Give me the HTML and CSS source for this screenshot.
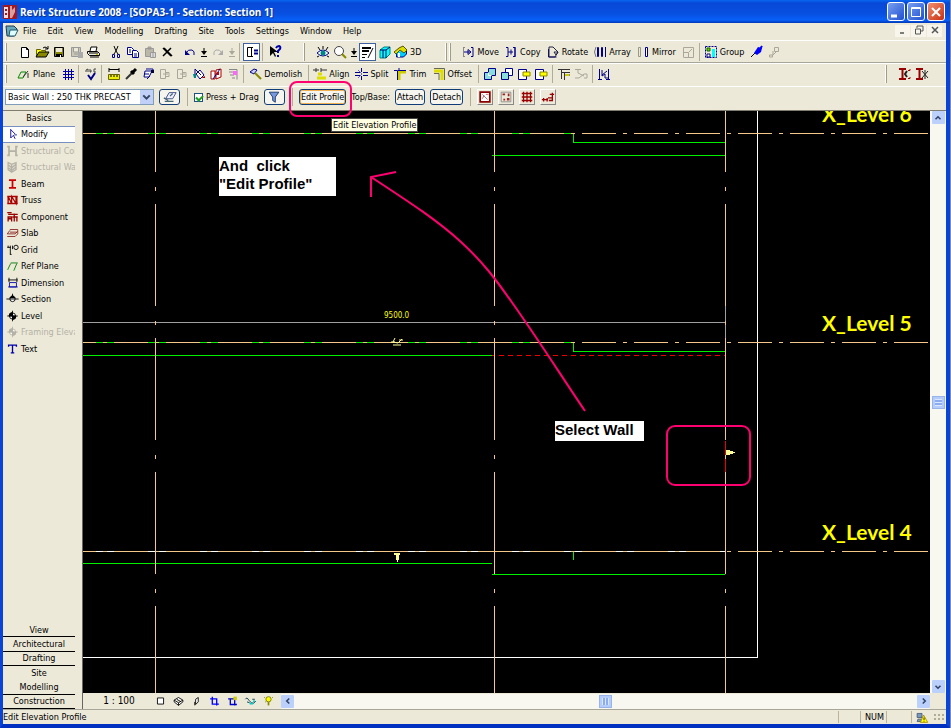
FILE: index.html
```html
<!DOCTYPE html>
<html lang="en">
<head>
<meta charset="utf-8">
<title>Revit Structure 2008 - [SOPA3-1 - Section: Section 1]</title>
<link rel="stylesheet" href="styles.css">
</head>
<body>
<svg class="sprite" aria-hidden="true">
  <symbol id="new" viewBox="0 0 16 16"><path d="M4.500 3.500h5l2 2v8h-7zM9.500 3.500v2h2" fill="#fff" stroke="#000"/></symbol>
  <symbol id="open" viewBox="0 0 16 16"><path d="M2.500 12.500v-7h4l1 1h4v2" fill="#ff0" stroke="#660"/><path d="M2 13l3-5h10l-3 5z" fill="#880" stroke="#000"/><path d="M9 4q2-2 4 0l1 1M14 2v3h-3" fill="none" stroke="#000"/></symbol>
  <symbol id="save" viewBox="0 0 16 16"><path d="M3.500 3.500h9v9h-9z" fill="#880" stroke="#000"/><path d="M5 4h6v4H5z" fill="#ece9d8"/><path d="M5 10h6v3H5z" fill="#000"/><path d="M9 11h1v2H9z" fill="#fff"/></symbol>
  <symbol id="saveall" viewBox="0 0 16 16"><path d="M3.500 3.500h9v9h-9zM5.500 4v4h5V4M6 10h5v3" fill="#ccc8b8" stroke="#999"/><path d="M10 8h5v6h-5z" fill="#aaa"/></symbol>
  <symbol id="print" viewBox="0 0 16 16"><path d="M5 7l1-4h6l-1 4" fill="#fff" stroke="#000"/><path d="M2.500 7.500h10l2 2v2h-10l-2-2zM5 13h9M4 9h9" fill="#ece9d8" stroke="#000"/><path d="M11 10h2v1h-2z" fill="#cc0"/></symbol>
  <symbol id="cut" viewBox="0 0 16 16"><path d="M6 2l2 5 2 3M10 2l-2 5-2 3" fill="none" stroke="#000"/><path d="M4.500 10.500h2v3h-2zM9.500 10.500h2v3h-2z" fill="none" stroke="#008"/></symbol>
  <symbol id="copy" viewBox="0 0 16 16"><path d="M2.500 3.500h4l2 2v5h-6z" fill="#fff" stroke="#008"/><path d="M7.500 6.500h4l2 2v5h-6zM9 10h3M9 12h3M4 6h2M4 8h2" fill="#fff" stroke="#008"/></symbol>
  <symbol id="paste" viewBox="0 0 16 16"><path d="M3.500 4.500h8v8h-8zM6 3h3v2H6z" fill="#bbb7a8" stroke="#999"/><path d="M8.500 8.500h5v5h-5zM10 10h2M10 12h2" fill="#ddd" stroke="#999"/></symbol>
  <symbol id="del" viewBox="0 0 16 16"><path d="M4 4l8 8M12 4l-8 8M5 4l8 8" fill="none" stroke="#000" stroke-width="1.500"/></symbol>
  <symbol id="undo" viewBox="0 0 16 16"><path d="M4 9q2-4 6-3 3 1 2 5" fill="none" stroke="#008"/><path d="M3 6v5h5z" fill="#008"/></symbol>
  <symbol id="redo" viewBox="0 0 16 16"><path d="M12 9q-2-4-6-3-3 1-2 5" fill="none" stroke="#aaa"/><path d="M13 6v5H8z" fill="#aaa"/></symbol>
  <symbol id="drop" viewBox="0 0 16 16"><path d="M8 4v4M5 12.500h6" stroke="currentColor" stroke-width="1" fill="none"/><path d="M5 7h6l-3 4z" fill="currentColor"/></symbol>
  <symbol id="browser" viewBox="0 0 16 16"><path d="M3.500 3.500h4v9h-4zM7 3.500h2M7 12.500h2" fill="none" stroke="#000"/><path d="M10 6.500h4M10 9.500h4" stroke="#008" stroke-width="2"/></symbol>
  <symbol id="help" viewBox="0 0 16 16"><path d="M3 2v10l3-3 2 4 1-1-2-4h4z" fill="#000"/><path d="M9 4q1-2 3-2 2 1 1 3l-2 2v2M11 11v2" stroke="#00a" stroke-width="2" fill="none"/></symbol>
  <symbol id="eye" viewBox="0 0 16 16"><path d="M2 9q6-6 12 0-6 6-12 0z" fill="#fff" stroke="#008"/><circle cx="8" cy="9" r="2.500" fill="#088"/><path d="M8 2v3M3 3l2 3M13 3l-2 3M4 12l-2 1M12 12l2 1" stroke="#000"/></symbol>
  <symbol id="zoom" viewBox="0 0 16 16"><circle cx="7" cy="7" r="4.500" fill="#fff" stroke="#444"/><path d="M10 10l4 4" stroke="#880" stroke-width="2"/></symbol>
  <symbol id="thin" viewBox="0 0 16 16"><path d="M2 4h9M2 7h7" stroke="#000" stroke-width="2"/><path d="M2 10.500h5M2 13.500h3" stroke="#000"/><path d="M13 4l-5 10" stroke="#000"/></symbol>
  <symbol id="cube" viewBox="0 0 16 16"><path d="M3 6l4-3h6v7l-4 4H3z" fill="#0ff" stroke="#008080"/><path d="M3 6h6v8M9 6l4-3M6 6v8" fill="none" stroke="#006"/></symbol>
  <symbol id="house" viewBox="0 0 16 16"><path d="M3.500 8v5h7l3-3V6" fill="#0cf" stroke="#008"/><path d="M1 8l5-4 4-2 4 4-3 3-4-3-4 4z" fill="#dd0" stroke="#550"/><path d="M5 9h2v4H5z" fill="#fff"/></symbol>
  <symbol id="move" viewBox="0 0 16 16"><path d="M3.500 3v10M3 3.500h2M3 12.500h2" stroke="#888" fill="none"/><path d="M4 8h6M8 5.500v5l3-2.500zM11 3.500h2v9h-2" stroke="#008" fill="none"/></symbol>
  <symbol id="copyel" viewBox="0 0 16 16"><path d="M3 3.500h2v9H3M10 3.500h2v9h-2M12 3v10" stroke="#008" fill="none"/><path d="M5 8h5M8 5.500v5" stroke="#008"/></symbol>
  <symbol id="rotate" viewBox="0 0 16 16"><path d="M3.500 5v8h8" stroke="#008" fill="none"/><path d="M4 3h4l5 5-3 5H4zM9 8l4 0-2 3z" stroke="#224" fill="none"/></symbol>
  <symbol id="array" viewBox="0 0 16 16"><path d="M4 3Q1 8 4 13" stroke="#777" fill="none"/><path d="M5.500 3.500h1v9h-1zM9.500 3.500h1v9h-1zM13.500 3v10" stroke="#008" fill="none"/></symbol>
  <symbol id="mirror" viewBox="0 0 16 16"><path d="M3.500 3.500h2v9h-2z" stroke="#998" fill="none"/><path d="M10.500 3.500h2v9h-2z" stroke="#008" fill="#fff"/></symbol>
  <symbol id="resize" viewBox="0 0 16 16"><path d="M3.500 13V3.500h10v10H8M3.500 8.500h5v5h-5M9 8l3-3" stroke="#aaa69a" fill="none"/></symbol>
  <symbol id="group" viewBox="0 0 16 16"><path d="M2.500 2.500h11v11h-11z" fill="none" stroke="#008" stroke-dasharray="2 1"/><path d="M4 4h3v3H4z" fill="#8c0" stroke="#060"/><path d="M9 5h3v8H9z" fill="#0ff"/><path d="M4 10h3v3H4z" fill="#fff" stroke="#008"/></symbol>
  <symbol id="pin" viewBox="0 0 16 16"><path d="M9 3l4 1-1 4-4 3-3-2z" fill="#00f"/><path d="M6 9l-4 4" stroke="#000"/><path d="M13 2l-2 3" stroke="#00f" stroke-width="2"/></symbol>
  <symbol id="unpin" viewBox="0 0 16 16"><path d="M8.500 3.500h4v4h-4zM7 7v4H3.500v2h3v-2M10 8l-3 3" stroke="#aaa69a" fill="none"/></symbol>
  <symbol id="wplane" viewBox="0 0 16 16"><path d="M2 12l3-6h5l-3 6z" fill="none" stroke="#080"/><path d="M7 11l5-6M12 7v5" stroke="#333"/></symbol>
  <symbol id="gridb" viewBox="0 0 16 16"><path d="M3 5.500h11M3 8.500h11M3 11.500h11M5.500 3v11M8.500 3v11M11.500 3v11" stroke="#0000a8" fill="none"/></symbol>
  <symbol id="spell" viewBox="0 0 16 16"><path d="M3 6V4l2-1v3M7 3v3h1V4M13 3h-2v3h2" stroke="#444" fill="none"/><path d="M5 9l3 4 4-6" stroke="#008" stroke-width="2" fill="none"/></symbol>
  <symbol id="tape" viewBox="0 0 16 16"><path d="M3 3.500h10M3 2v4M13 2v4" stroke="#000"/><path d="M2.500 8.500h11v5h-11z" fill="#ee0" stroke="#660"/><path d="M5 9v2M8 9v2M11 9v2" stroke="#000"/></symbol>
  <symbol id="dropper" viewBox="0 0 16 16"><path d="M3 13l6-6" stroke="#333" stroke-width="2"/><path d="M8 5l3 3M10 6l3-3" stroke="#000" stroke-width="3"/></symbol>
  <symbol id="paint" viewBox="0 0 16 16"><path d="M5 5h7l-3 6H4zM6 3h7v3M4 8h5M7 13l3-3" fill="#fff" stroke="#008"/><path d="M11 4h3v3h-3z" fill="#003"/></symbol>
  <symbol id="linkg" viewBox="0 0 16 16"><path d="M3.500 3.500h5v9h-5zM8 6.500h4v4H8M6 8h5" stroke="#aaa69a" fill="none"/></symbol>
  <symbol id="bucket" viewBox="0 0 16 16"><path d="M5 8l4-4 4 5-4 4z" fill="#fff" stroke="#008"/><path d="M4 3v6M4 3l6 6" stroke="#008"/><path d="M2 8h3v4H3z" fill="#088"/><path d="M10 12l4-2v2z" fill="#a00"/></symbol>
  <symbol id="split" viewBox="0 0 16 16"><path d="M3 5h4v8H3zM8 4l5-1v8l-5 2z" fill="#fff" stroke="#a00"/><path d="M5 13L12 3" stroke="#008"/><path d="M9 6h2v3H9z" fill="#c00"/></symbol>
  <symbol id="phase" viewBox="0 0 16 16"><path d="M4 3.500h8v10M4 6h4M5 9h4M7 12h3" stroke="#888" fill="none"/><path d="M8 5h4v4H8z" fill="#f6f"/></symbol>
  <symbol id="hammer" viewBox="0 0 16 16"><path d="M3 6l4-3 3 1-3 4z" fill="#ccf" stroke="#008"/><path d="M8 7l6 6" stroke="#880" stroke-width="2"/></symbol>
  <symbol id="align" viewBox="0 0 16 16"><path d="M1 4h6M9 4h6M4 2v4M9 2v4" stroke="#333"/><path d="M6 8h4M5 12h9" stroke="#dd0" stroke-width="3" fill="none"/></symbol>
  <symbol id="splitel" viewBox="0 0 16 16"><path d="M2 6.500h5M2 9.500h5M10 6.500h5M10 9.500h5M8.500 2v4M8.500 10v4" stroke="#008"/><path d="M5 4l4 4-4 4" stroke="#66c" fill="none"/></symbol>
  <symbol id="trim" viewBox="0 0 16 16"><path d="M2 4.500h3M7 2v3" stroke="#008"/><path d="M7 14V6h7" stroke="#cc0" stroke-width="3" fill="none"/><path d="M5.500 14V4.500H14" stroke="#008" fill="none"/></symbol>
  <symbol id="offset" viewBox="0 0 16 16"><path d="M3 5h8v9" stroke="#dd0" stroke-width="3" fill="none"/><path d="M3 2.500h10.500V14M3 7.500h5V14" stroke="#665" fill="none"/></symbol>
  <symbol id="join" viewBox="0 0 16 16"><path d="M6.500 2.500h7v7h-4v4h-7v-7h4z" fill="#8dd" stroke="#008"/><path d="M6.500 6.500v3h3" fill="none" stroke="#fff"/></symbol>
  <symbol id="unjoin" viewBox="0 0 16 16"><path d="M6.500 2.500h7v7h-7z" fill="#fff" stroke="#008"/><path d="M2.500 6.500h7v7h-7z" fill="#8dd" stroke="#008"/></symbol>
  <symbol id="cutg" viewBox="0 0 16 16"><path d="M2.500 3.500h8v10h-8z" fill="#fff" stroke="#008"/><path d="M7 6h7v4H7z" fill="#ff0" stroke="#880"/></symbol>
  <symbol id="beamj" viewBox="0 0 16 16"><path d="M2 3.500h12M5.500 4v9M8.500 6v8M6 6.500h8M9 9h5" stroke="#333" fill="none"/><path d="M9 8h4v2H9z" fill="#cc0"/></symbol>
  <symbol id="beamk" viewBox="0 0 16 16"><path d="M2 3.500h6M5 4v3l6 3M2 12h4l5-4h3v4h-3" stroke="#aaa69a" fill="none"/></symbol>
  <symbol id="wallj" viewBox="0 0 16 16"><path d="M3.500 3v10.500M12.500 3v10.500M2 13.500h4M10 13.500h4M6 4v6l3-2v4h4M6 9l5-4" stroke="#008" fill="none"/></symbol>
  <symbol id="beamr" viewBox="0 0 16 16"><path d="M2 3h7M5.500 3v10M2 13h7" stroke="#900" stroke-width="2"/><path d="M10 5l-2 3 2 3" stroke="#222" fill="none" stroke-width="2"/><path d="M11 4.500h2V3M11 12.500h2V11" stroke="#900" fill="none"/></symbol>
  <symbol id="beamx" viewBox="0 0 16 16"><path d="M2 3h7M5.500 3v10M2 13h7" stroke="#900" stroke-width="2"/><path d="M8 5l6 7M14 5l-6 7M11 4v9" stroke="#222"/></symbol>
  <symbol id="props" viewBox="0 0 16 16"><path d="M7 3h8l-4 7H3z" fill="#eef" stroke="#347"/><path d="M2 13h10M8 7l3-3M1 9l5 3" stroke="#467" stroke-width="1.500"/></symbol>
  <symbol id="filter" viewBox="0 0 16 16"><path d="M2.500 2.500h11L9.500 8v6l-3-2V8z" fill="#79d" stroke="#136"/></symbol>
  <symbol id="r1" viewBox="0 0 16 16"><path d="M2.500 2.500h11v11h-11z" fill="#fff" stroke="#800" stroke-width="2"/><path d="M5 5l6 6M5 10l2-4M9 5h3" stroke="#a66"/></symbol>
  <symbol id="r2" viewBox="0 0 16 16"><path d="M2.500 2.500h11v11h-11z" fill="none" stroke="#888"/><path d="M4 4h3v2H4zM10 4h2v3h-2zM5 10h2v2H5zM9 9h3v3H9z" fill="#922"/></symbol>
  <symbol id="r3" viewBox="0 0 16 16"><path d="M2 4h12M2 8h12M2 12h12M4 2v12M8 2v12M12 2v12" stroke="#900" stroke-width="1.500"/></symbol>
  <symbol id="r4" viewBox="0 0 16 16"><path d="M3 9v4M1 11h7M7 9v4M9 12h4V3M10 5h5M8 9h5" stroke="#900" stroke-width="1.500" fill="none"/></symbol>
  <symbol id="modify" viewBox="0 0 16 16"><path d="M6 2.500v10l3-3 2 4M6 3l5 5M10 9h3" fill="none" stroke="#008"/></symbol>
  <symbol id="col" viewBox="0 0 16 16"><path d="M4 3v10M12 3v10M4 8h8M2 3h3M2 13h3M11 3h3M11 13h3" stroke="#b4b1a6" stroke-width="2"/></symbol>
  <symbol id="swall" viewBox="0 0 16 16"><path d="M3 3l4 2 5-2v8l-5 3-4-3zM7 5v9M4 6l3 3 5-4M4 9l3 3 5-4" stroke="#b4b1a6" stroke-width="1.500" fill="none"/></symbol>
  <symbol id="beam" viewBox="0 0 16 16"><path d="M4 3.500h8M8 3v10M4 12.500h8" stroke="#c00" stroke-width="2"/></symbol>
  <symbol id="truss" viewBox="0 0 16 16"><path d="M2 4h12M2 12h12M3 4v8M13 4v8M3 4l4 8V4l5 8V4" stroke="#a00" stroke-width="1.500" fill="none"/></symbol>
  <symbol id="comp" viewBox="0 0 16 16"><path d="M2 3h5M3 5h11M10 4v9M8 8h6M3 13V8h4v5M3 10h4M13 8v5" stroke="#900" stroke-width="1.500" fill="none"/></symbol>
  <symbol id="slab" viewBox="0 0 16 16"><path d="M5 4h9v5l-3 3H2M2 9h9l3-3M2 9l3-4M5 7h8" stroke="#822" fill="none" stroke-width="1"/></symbol>
  <symbol id="grid" viewBox="0 0 16 16"><circle cx="12" cy="5" r="2.500" fill="none" stroke="#000"/><path d="M5.500 3v10M2 5h4M8 3v4M3 3v2M5 13h2" stroke="#000"/></symbol>
  <symbol id="ref" viewBox="0 0 16 16"><path d="M6 4.500h8M3 11l3-6M10 12l3-7" stroke="#070" fill="none"/><path d="M2 12l2-1M9 13l2-1" stroke="#0a0"/></symbol>
  <symbol id="dim" viewBox="0 0 16 16"><path d="M4 2v5M13 2v5M3 4.500h11" stroke="#000"/><path d="M4.500 7.500h8v5h-8zM3 12.500h11" stroke="#00a" fill="none"/></symbol>
  <symbol id="sect" viewBox="0 0 16 16"><circle cx="8" cy="8" r="3" fill="#fff" stroke="#000"/><path d="M1 8h14M8 2v3" stroke="#000"/><path d="M4 7l4-4 4 4z" fill="#000"/></symbol>
  <symbol id="level" viewBox="0 0 16 16"><circle cx="8" cy="8" r="3.500" fill="#fff" stroke="currentColor"/><path d="M2 8h12M8 2v12" stroke="currentColor"/><path d="M8 4v4H4q0-4 4-4zM8 12V8h4q0 4-4 4z" fill="currentColor" stroke="currentColor"/></symbol>
  <symbol id="text" viewBox="0 0 16 16"><path d="M3.500 5.500v-2h9v2M8 3.500v9M6 12.500h4" stroke="#00a" stroke-width="1.500" fill="none"/></symbol>
  <symbol id="vbox" viewBox="0 0 16 16"><path d="M4.500 4.500h7v7h-7z" fill="#fff" stroke="#000"/></symbol>
  <symbol id="vcube" viewBox="0 0 16 16"><path d="M3 7l5-3 5 3v2l-5 4-5-4zM3 7l5 3 5-3M8 10v3M6 6l5 3" fill="#fff" stroke="#000"/></symbol>
  <symbol id="vshadow" viewBox="0 0 16 16"><path d="M7 6l3-2v5l-3 3zM6 9v4" fill="#fff" stroke="#000"/></symbol>
  <symbol id="vcrop" viewBox="0 0 16 16"><path d="M5.500 3v8.500H13M3 5.500h7.500V13" fill="none" stroke="#00f" stroke-width="1.500"/></symbol>
  <symbol id="vcrop2" viewBox="0 0 16 16"><path d="M5.500 5v7H13M3 5.500h7.500V13" fill="none" stroke="#00c" stroke-width="1.500"/><path d="M9 3h4v4H9z" fill="#cc0"/></symbol>
  <symbol id="vhide" viewBox="0 0 16 16"><path d="M2 6q2-3 4 1l3 3q3 2 5-2M4 9l3 1M10 6l3 0" fill="none" stroke="#034"/><path d="M7 10h4v2H7zM11 7h2v2h-2z" fill="#0cc"/></symbol>
  <symbol id="bulb" viewBox="0 0 16 16"><circle cx="8" cy="6" r="3" fill="#ff0" stroke="#770"/><path d="M7 9h2v4H7z" fill="#880"/><path d="M3 4h1M12 4h1M4 9h1" stroke="#880"/></symbol>
  <symbol id="chev" viewBox="0 0 16 16"><path d="M4 6l4 4 4-4" fill="none" stroke="#346" stroke-width="2.500"/></symbol>
  <symbol id="warn" viewBox="0 0 16 16"><path d="M2 3h6v5H2zM3 10h6v3H2z" fill="#79b" stroke="#457"/><path d="M10 5l5 9H6z" fill="#ff0" stroke="#a80"/><path d="M10.500 8v3M10.500 12v1" stroke="#000"/></symbol>
</svg>

<div class="window">
  <header class="title">
    <svg class="logo" viewBox="0 0 14 14" aria-hidden="true"><path d="M0 0h14v14H0z" fill="#a01820"/><path d="M1 2h4v11H1z" fill="#f4dcdc"/><path d="M2 4h2v2H2zM2 8h2v2H2z" fill="#a01820"/><path d="M7 1h2v4l3-3v5l-3 6H7z" fill="#d8a0a0"/></svg>
    <h1>Revit Structure 2008 - [SOPA3-1 - Section: Section 1]</h1>
    <button class="cap" aria-label="Minimize"><svg viewBox="0 0 16 16"><path d="M3 12h6" stroke="#fff" stroke-width="3"/></svg></button>
    <button class="cap" aria-label="Maximize"><svg viewBox="0 0 16 16"><path d="M3.500 3.500h9v9h-9zM3 4.500h10" fill="none" stroke="#fff"/></svg></button>
    <button class="cap close" aria-label="Close"><svg viewBox="0 0 16 16"><path d="M4 4l8 8M12 4l-8 8" stroke="#fff" stroke-width="2"/></svg></button>
  </header>

  <nav class="menu">
    <svg class="doc" viewBox="0 0 14 14" aria-hidden="true"><path d="M1 2h8l3 3-3 7H2z" fill="#6ab" stroke="#235"/><path d="M5 6h8l-3 6H4z" fill="#dff" stroke="#256"/></svg>
    <button>File</button><button>Edit</button><button>View</button><button>Modelling</button><button>Drafting</button><button>Site</button><button>Tools</button><button>Settings</button><button>Window</button><button>Help</button>
    <span class="push"></span>
    <button class="mdi" aria-label="Minimize document"><svg viewBox="0 0 10 10"><path d="M2 8h4" stroke="#555" stroke-width="1.500"/></svg></button>
    <button class="mdi" aria-label="Restore document"><svg viewBox="0 0 10 10"><path d="M3 3V1h6v5H7M1.500 4h5v5h-5z" stroke="#555" fill="none"/></svg></button>
    <button class="mdi" aria-label="Close document"><svg viewBox="0 0 10 10"><path d="M2 2l6 6M8 2l-6 6" stroke="#555" stroke-width="1.500"/></svg></button>
  </nav>

  <div class="bar">
    <i class="grip"></i><i class="lead"></i>
    <button class="ib" aria-label="New"><svg><use href="#new"/></svg></button>
    <button class="ib" aria-label="Open"><svg><use href="#open"/></svg></button>
    <button class="ib" aria-label="Save"><svg><use href="#save"/></svg></button>
    <button class="ib" aria-label="Save to central"><svg><use href="#saveall"/></svg></button>
    <button class="ib" aria-label="Print"><svg><use href="#print"/></svg></button>
    <i class="sep"></i>
    <button class="ib" aria-label="Cut"><svg><use href="#cut"/></svg></button>
    <button class="ib" aria-label="Copy to clipboard"><svg><use href="#copy"/></svg></button>
    <button class="ib" aria-label="Paste"><svg><use href="#paste"/></svg></button>
    <button class="ib" aria-label="Delete"><svg><use href="#del"/></svg></button>
    <i class="sep"></i>
    <button class="ib" aria-label="Undo"><svg><use href="#undo"/></svg></button>
    <button class="mini" aria-label="Undo list"><svg><use href="#drop"/></svg></button>
    <button class="ib" aria-label="Redo"><svg><use href="#redo"/></svg></button>
    <button class="mini dim" aria-label="Redo list"><svg><use href="#drop"/></svg></button>
    <i class="sep line"></i>
    <button class="ib on" aria-label="Project browser"><svg><use href="#browser"/></svg></button>
    <i class="sep line"></i>
    <button class="ib" aria-label="Context help"><svg><use href="#help"/></svg></button>
    <i class="wide"></i><i class="grip"></i><i class="lead"></i>
    <button class="ib" aria-label="Dynamic view"><svg><use href="#eye"/></svg></button>
    <button class="ib" aria-label="Zoom"><svg><use href="#zoom"/></svg></button>
    <button class="mini" aria-label="Zoom list"><svg><use href="#drop"/></svg></button>
    <button class="ib on" aria-label="Thin lines"><svg><use href="#thin"/></svg></button>
    <button class="ib" aria-label="Shaded view"><svg><use href="#cube"/></svg></button>
    <button class="tb"><svg><use href="#house"/></svg>3D</button>
    <i class="wide"></i><i class="grip"></i><i class="grip"></i><i class="lead"></i>
    <button class="tb"><svg><use href="#move"/></svg>Move</button>
    <button class="tb"><svg><use href="#copyel"/></svg>Copy</button>
    <button class="tb"><svg><use href="#rotate"/></svg>Rotate</button>
    <button class="tb"><svg><use href="#array"/></svg>Array</button>
    <button class="tb"><svg><use href="#mirror"/></svg>Mirror</button>
    <button class="ib" aria-label="Resize"><svg><use href="#resize"/></svg></button>
    <i class="sep line"></i>
    <button class="tb"><svg><use href="#group"/></svg>Group</button>
    <button class="ib" aria-label="Pin"><svg><use href="#pin"/></svg></button>
    <button class="ib" aria-label="Unpin"><svg><use href="#unpin"/></svg></button>
  </div>

  <div class="bar">
    <i class="grip"></i><i class="lead"></i>
    <button class="tb"><svg><use href="#wplane"/></svg>Plane</button>
    <button class="ib" aria-label="Work plane grid"><svg><use href="#gridb"/></svg></button>
    <i class="sep line"></i>
    <button class="ib" aria-label="Spelling"><svg><use href="#spell"/></svg></button>
    <i class="sep line"></i>
    <button class="ib" aria-label="Tape measure"><svg><use href="#tape"/></svg></button>
    <button class="ib" aria-label="Match type"><svg><use href="#dropper"/></svg></button>
    <button class="ib" aria-label="Linework"><svg><use href="#paint"/></svg></button>
    <button class="ib" aria-label="Link"><svg><use href="#linkg"/></svg></button>
    <button class="ib" aria-label="Unlink"><svg><use href="#linkg"/></svg></button>
    <button class="ib" aria-label="Paint"><svg><use href="#bucket"/></svg></button>
    <button class="ib" aria-label="Split face"><svg><use href="#split"/></svg></button>
    <button class="ib" aria-label="Phase"><svg><use href="#phase"/></svg></button>
    <i class="sep line"></i>
    <button class="tb"><svg><use href="#hammer"/></svg>Demolish</button>
    <i class="sep line"></i>
    <button class="tb"><svg><use href="#align"/></svg>Align</button>
    <button class="tb"><svg><use href="#splitel"/></svg>Split</button>
    <button class="tb"><svg><use href="#trim"/></svg>Trim</button>
    <button class="tb"><svg><use href="#offset"/></svg>Offset</button>
    <i class="sep line"></i>
    <button class="ib" aria-label="Join geometry"><svg><use href="#join"/></svg></button>
    <button class="ib" aria-label="Unjoin geometry"><svg><use href="#unjoin"/></svg></button>
    <button class="ib" aria-label="Cut geometry"><svg><use href="#cutg"/></svg></button>
    <button class="ib" aria-label="Uncut geometry"><svg><use href="#cutg"/></svg></button>
    <i class="sep line"></i>
    <button class="ib" aria-label="Beam joins"><svg><use href="#beamj"/></svg></button>
    <button class="ib" aria-label="Coping"><svg><use href="#beamk"/></svg></button>
    <i class="sep line"></i>
    <button class="ib" aria-label="Wall joins"><svg><use href="#wallj"/></svg></button>
    <span class="push"></span>
    <i class="grip"></i><i class="lead"></i>
    <button class="ib" aria-label="Release beam"><svg><use href="#beamr"/></svg></button>
    <button class="ib" aria-label="Reset beam"><svg><use href="#beamx"/></svg></button>
    <i class="tail"></i>
  </div>

  <div class="options">
    <span class="pick"><select aria-label="Type"><option>Basic Wall : 250 THK PRECAST</option></select><svg><use href="#chev"/></svg></span>
    <button class="xp" aria-label="Element properties"><svg><use href="#props"/></svg></button>
    <i class="sep line"></i>
    <label class="check"><input type="checkbox" checked>Press + Drag</label>
    <button class="xp" aria-label="Filter selection"><svg><use href="#filter"/></svg></button>
    <i class="sep line"></i>
    <span class="callout"><button class="xp hot">Edit Profile</button><span class="tip" role="tooltip">Edit Elevation Profile</span></span>
    <span>Top/Base:</span>
    <button class="xp">Attach</button>
    <button class="xp">Detach</button>
    <i class="sep line"></i>
    <button class="raised" aria-label="Area"><svg><use href="#r1"/></svg></button>
    <button class="raised" aria-label="Path"><svg><use href="#r2"/></svg></button>
    <button class="raised" aria-label="Reinforcement"><svg><use href="#r3"/></svg></button>
    <button class="raised" aria-label="Rebar"><svg><use href="#r4"/></svg></button>
  </div>

  <main class="work">
    <aside class="side">
      <h2>Basics</h2>
      <ul class="tools">
        <li><button class="sel"><svg><use href="#modify"/></svg>Modify</button></li>
        <li><button disabled><svg><use href="#col"/></svg>Structural Column</button></li>
        <li><button disabled><svg><use href="#swall"/></svg>Structural Wall</button></li>
        <li><button><svg><use href="#beam"/></svg>Beam</button></li>
        <li><button><svg><use href="#truss"/></svg>Truss</button></li>
        <li><button><svg><use href="#comp"/></svg>Component</button></li>
        <li><button><svg><use href="#slab"/></svg>Slab</button></li>
        <li><button><svg><use href="#grid"/></svg>Grid</button></li>
        <li><button><svg><use href="#ref"/></svg>Ref Plane</button></li>
        <li><button><svg><use href="#dim"/></svg>Dimension</button></li>
        <li><button><svg><use href="#sect"/></svg>Section</button></li>
        <li><button><svg><use href="#level"/></svg>Level</button></li>
        <li><button disabled><svg><use href="#level"/></svg>Framing Elevation</button></li>
        <li><button><svg><use href="#text"/></svg>Text</button></li>
      </ul>
      <div class="tabs">
        <button>View</button><button>Architectural</button><button>Drafting</button><button class="plain">Site</button><button>Modelling</button><button>Construction</button>
      </div>
    </aside>

    <section class="view">
      <div class="canvas">
        <svg class="plan" viewBox="83 111 847 582" preserveAspectRatio="xMinYMin slice">
          <g fill="none" stroke="#00f000" shape-rendering="crispEdges">
            <path d="M83 133.500h491M573.500 133v9M573 142.500h152M492 155.500h233M83 342.500h491M573.500 342v9M573 351.500h152M83 355.500h409M83 563.500h409M573.500 552v8M492 574.500h233"/>
            <path stroke="#f00000" d="M492 355.500h2M725.500 441v31"/>
            <path stroke="#f00000" stroke-dasharray="5 4" d="M499 355.500h227"/>
            <path stroke="#a0a0a0" d="M83 322.500h642M725.500 306v32"/>
            <path stroke="#fff" d="M83 551.500h642M757.500 111v546.500H83"/>
            <path stroke="#f4c888" stroke-dasharray="34 7 4 7" d="M62 133.500h868M62 342.500h868M62 551.500h868"/>
            <path stroke="#f4c888" stroke-dasharray="102 15 4 13" d="M155.500 70v623M494.500 70v623M725.500 70v623"/>
          </g>
          <g fill="#ffff99">
            <path d="M726 450h4v1h3v1h2v1h-2v1h-3v1h-4zM394 553h6v2h-1v5h-1v2h-1v-2h-1v-5h-2z"/>
            <path d="M391 342h4M399 340h4M395 338l-2 4 5 1 4-4M393 345h8" fill="none" stroke="#ffff99"/>
          </g>
          <g class="names"><text x="822" y="122">X_Level 6</text><text x="822" y="331">X_Level 5</text><text x="822" y="540">X_Level 4</text></g>
          <text class="measure" x="384" y="318">9500.0</text>
          <g fill="none" stroke="#ff0070" stroke-width="2">
            <path d="M371 197v-20l25-5M371 177C403 198 436 219 461 242C484 263 496 280 511 301C538 339 560 374 585 411"/>
            <rect x="667" y="426" width="83" height="59" rx="8"/>
          </g>
        </svg>
        <p class="note click">And&nbsp; click<br>"Edit Profile"</p>
        <p class="note wall">Select Wall</p>
      </div>
      <div class="vscroll">
        <button class="sb up" aria-label="Scroll up"><svg><use href="#chev"/></svg></button>
        <i class="thumb"></i>
        <button class="sb" aria-label="Scroll down"><svg><use href="#chev"/></svg></button>
      </div>
      <div class="viewbar">
        <button class="scale">1 : 100</button>
        <button class="vb" aria-label="Detail level"><svg><use href="#vbox"/></svg></button>
        <button class="vb" aria-label="Model graphics"><svg><use href="#vcube"/></svg></button>
        <button class="vb" aria-label="Shadows"><svg><use href="#vshadow"/></svg></button>
        <button class="vb" aria-label="Crop view"><svg><use href="#vcrop"/></svg></button>
        <button class="vb" aria-label="Show crop region"><svg><use href="#vcrop2"/></svg></button>
        <button class="vb" aria-label="Hide or isolate"><svg><use href="#vhide"/></svg></button>
        <button class="vb" aria-label="Reveal hidden"><svg><use href="#bulb"/></svg></button>
        <div class="hscroll">
          <button class="sb left" aria-label="Scroll left"><svg><use href="#chev"/></svg></button>
          <i class="thumb"></i>
          <button class="sb right" aria-label="Scroll right"><svg><use href="#chev"/></svg></button>
        </div>
      </div>
      <i class="corner"></i>
    </section>
  </main>

  <footer class="status">
    <span>Edit Elevation Profile</span>
    <span class="push"></span>
    <span class="cell"></span><span class="cell num">NUM</span><span class="cell gapcell"></span>
    <svg><use href="#warn"/></svg><i class="size"></i>
  </footer>
</div>
</body>
</html>
```
FILE: styles.css
```css
* { box-sizing: border-box; }
body {
  margin: 0;
  background: #888c98;
  color: #000;
  font: 9px/12px "DejaVu Sans Condensed", "Liberation Sans", sans-serif;
}
h1, h2, p, ul { margin: 0; padding: 0; list-style: none; }
button, select, input { font: inherit; color: inherit; margin: 0; padding: 0; }
button { border: 0; background: none; white-space: nowrap; flex: none; }
svg { width: 16px; height: 16px; flex: none; display: block; }
.sprite { position: absolute; width: 0; height: 0; }
.push { flex: 1; }

.window {
  min-height: 100vh;
  margin-right: 1px;
  display: flex;
  flex-direction: column;
  background: #ece9d8;
  border: solid #0844d8;
  border-width: 0 4px 4px 3px;
  border-bottom-color: #0030c0;
}

.title {
  height: 23px;
  margin: 0 -4px 0 -3px;
  padding: 0 5px 0 3px;
  display: flex;
  align-items: center;
  gap: 2px;
  color: #fff;
  background: linear-gradient(#0868f0 0, #0848d8 3px, #0850e0 14px, #0860f8 20px, #0038b8 23px);
}
.title h1 { flex: 1; font: bold 10px/14px "Open Sans", sans-serif; text-shadow: 1px 1px 0 #003090; }
.logo { width: 14px; height: 14px; margin-right: 1px; }
.cap { width: 18px; height: 19px; border: 1px solid #fff; border-radius: 3px; background: linear-gradient(135deg, #78a0f0, #2050d0); }
.cap svg { margin: auto; }
.close { background: linear-gradient(135deg, #f09070, #c83010); }

.menu { height: 17px; display: flex; align-items: center; gap: 11px; padding: 0 4px 2px 2px; }
.doc { width: 14px; height: 14px; margin-right: -7px; }
.mdi { width: 15px; height: 12px; background: #f8f6ec; margin-left: -11px; display: flex; justify-content: center; }
.mdi + .mdi { margin-left: -10px; }
.mdi svg { width: 10px; height: 10px; }

.bar { height: 23px; display: flex; align-items: center; border-top: 1px solid #fff; border-bottom: 1px solid #a8a698; padding-left: 2px; }
.bar + .bar { height: 24px; border-bottom-color: #fff; padding-bottom: 2px; }
.grip { width: 2px; height: 18px; border-right: 1px solid #a09c88; background: #fff; flex: none; }
.grip + .grip { margin-left: 2px; }
.lead { width: 9px; flex: none; }
.wide { width: 20px; flex: none; }
.tail { width: 16px; flex: none; }
.sep { width: 6px; height: 18px; flex: none; }
.line { background: linear-gradient(#b0ac98, #b0ac98) 2px 0 / 1px 100% no-repeat; }
.ib { width: 17px; height: 18px; display: flex; align-items: center; justify-content: center; }
.on { background: #fff; border: 1px solid #4060a0; }
.mini { width: 11px; height: 16px; display: flex; align-items: center; justify-content: center; overflow: hidden; }
.dim { color: #aaa69a; }
.tb { display: flex; align-items: center; gap: 1px; padding-right: 4px; }

.options { height: 24px; display: flex; align-items: center; gap: 5px; padding: 0 2px 3px; border-bottom: 1px solid #807c70; }
.options .sep { width: 4px; }
.pick { position: relative; width: 149px; height: 16px; flex: none; }
.pick select { width: 100%; height: 100%; border: 1px solid #7f9db9; background: #fff; appearance: none; border-radius: 0; padding: 0 16px 0 2px; }
.pick svg { position: absolute; right: 1px; top: 1px; width: 13px; height: 14px; background: #c0d0f8; pointer-events: none; }
.xp { height: 16px; min-width: 21px; padding: 0 1px; border: 1px solid #103c78; border-radius: 3px; background: #f6f5ee; display: inline-flex; align-items: center; justify-content: center; }
.xp svg { height: 14px; }
.check { display: flex; align-items: center; gap: 3px; }
.check input { appearance: none; width: 9px; height: 9px; border: 1px solid #1c5180; background: #fff; display: grid; }
.check input:checked::before { content: ""; width: 5px; height: 3px; margin: 1px; border: solid #20a020; border-width: 0 0 2px 2px; transform: rotate(-45deg); }
.callout { position: relative; z-index: 2; }
.callout::after { content: ""; position: absolute; inset: -8px -6px -12px -10px; border: 2px solid #ff0070; border-radius: 8px; pointer-events: none; }
.hot { box-shadow: inset 0 0 0 1px #f0b050; display: flex; }
.tip { position: absolute; left: 32px; top: 29px; padding: 0 1px; border: 1px solid #444; background: #ffffe1; white-space: nowrap; }
.raised { width: 16px; height: 16px; border: 1px solid; border-color: #fff #888 #888 #fff; }
.raised svg { width: 14px; height: 14px; }

.work { flex: 1; display: flex; min-height: 0; }
.side { width: 80px; padding-right: 7px; display: flex; flex-direction: column; border-right: 1px solid #666; flex: none; }
.side h2 { font: inherit; line-height: 15px; height: 15px; text-align: center; }
.tools { height: 231px; display: flex; flex-direction: column; }
.tools li { flex: 1; display: flex; }
.tools button { width: 100%; display: flex; align-items: center; gap: 1px; overflow: hidden; padding: 0; border: 0 solid #7890c0; }
.tools svg { width: 15px; height: 14px; margin-left: 2px; }
.tools .sel { background: #fff; border-width: 1px 0; }
.tools button:disabled { color: #b4b1a6; }
.tabs { margin-top: auto; height: 86px; display: flex; flex-direction: column; }
.tabs button { flex: 1; border-bottom: 1px solid #000; }
.tabs .plain { border-bottom-color: transparent; }

.view { flex: 1; min-width: 0; display: grid; grid-template: 1fr 16px / 1fr 16px; }
.canvas { position: relative; overflow: hidden; background: #000; }
.plan { position: absolute; width: 100%; height: 100%; }
.names { font: bold 21px Lato, "Open Sans", sans-serif; fill: #ff0; }
.measure { font-size: 8px; fill: #ff0; }
.note { position: absolute; background: #fff; font: bold 15px/18px "Liberation Sans", sans-serif; }
.click { left: 136px; top: 46px; width: 117px; height: 39px; }
.wall { left: 472px; top: 310px; width: 89px; height: 20px; }
.vscroll { background: #f8f7f0; display: flex; flex-direction: column; align-items: center; }
.sb { width: 13px; height: 13px; background: #bcd0fc; display: flex; align-items: center; justify-content: center; border-radius: 1px; }
.sb svg { width: 10px; height: 10px; }
.up svg { transform: rotate(180deg); }
.left svg { transform: rotate(90deg); }
.right svg { transform: rotate(-90deg); }
.thumb { width: 13px; height: 13px; margin: auto; background: repeating-linear-gradient(#dce8ff 0 1px, #8cacf0 1px 3px) center / 7px 7px no-repeat #b4ccfc; border: 1px solid #98b4e8; }
.viewbar { display: flex; align-items: center; }
.scale { width: 68px; padding-left: 4px; text-align: center; font-size: 10px; }
.vb { width: 18px; height: 14px; display: flex; align-items: center; justify-content: center; }
.vb svg { width: 15px; height: 14px; }
.hscroll { flex: 1; display: flex; align-items: center; height: 15px; margin-left: 4px; background: #f8f7f0; }
.hscroll .thumb { background-image: repeating-linear-gradient(90deg, #dce8ff 0 1px, #8cacf0 1px 3px); }

.status { height: 15px; display: flex; align-items: center; border-top: 1px solid #a8a698; }
.cell { height: 12px; width: 22px; border-left: 1px solid #b8b4a0; padding-left: 4px; }
.num { width: 26px; }
.gapcell { width: 26px; border-right: 1px solid #b8b4a0; }
.status svg { width: 14px; height: 13px; margin-left: 3px; }
.size { width: 12px; height: 9px; margin: 0 1px 0 4px; background: radial-gradient(#b0ac98 1px, transparent 1px) 0 0 / 4px 4px; }
```
